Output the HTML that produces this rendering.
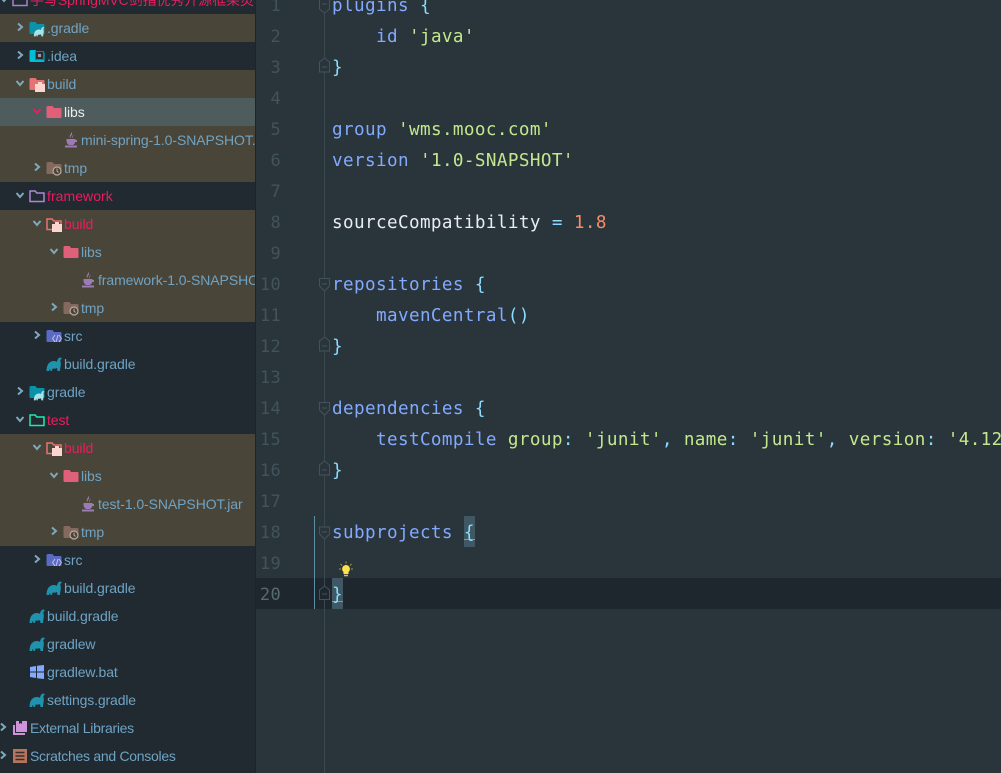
<!DOCTYPE html>
<html><head><meta charset="utf-8">
<style>
html,body{margin:0;padding:0;width:1001px;height:773px;overflow:hidden;background:#29343b}
#side{position:absolute;left:0;top:0;width:255px;height:773px;background:#202a30;overflow:hidden;font:14px "Liberation Sans","Noto Sans CJK SC",sans-serif;letter-spacing:-.08px;color:#6fa3c4}
.r{position:absolute;left:0;width:255px;height:28px;line-height:28px;white-space:nowrap}
.o{background:#4a4539}
.s{background:#4f5c5d}
.t{position:absolute;top:0}
.p{color:#e91e5f}
.w{color:#e8edf0}
svg.i{position:absolute;width:16px;height:16px;top:6px}
svg.a{position:absolute;width:10px;height:10px;top:8px;fill:none;stroke:#7fa9bd;stroke-width:2}
#gut{position:absolute;left:256px;top:0;width:745px;height:773px;overflow:hidden;font:17.6px/31px "DejaVu Sans Mono","Liberation Mono",monospace;letter-spacing:.4px;color:#82aaff;background:#29343b}
.l{position:absolute;left:76px;white-space:pre;height:31px;margin-top:1px}
.n{position:absolute;left:0;width:25px;text-align:right;color:#43535b;font-size:17px;letter-spacing:.3px;height:31px;margin-top:1px}
.g{color:#c3e88d}.b{color:#89ddff}
.h{position:absolute;width:11px;height:31px;background:#3f5863}
.h i{position:absolute;left:0;top:23px;width:11px;height:1px;background:#b2962f}
</style></head><body>
<svg width="0" height="0" style="position:absolute">
<defs>
<symbol id="f" viewBox="0 0 16 16"><path d="M0.500 3.500Q0.500 2 2 2H6.500L8 4H14.500Q15.500 4 15.500 5V13Q15.500 14 14.500 14H1.500Q0.500 14 0.500 13Z"/></symbol>
<symbol id="fo" viewBox="0 0 16 16"><path fill="none" stroke-width="1.500" d="M1 3H6.200L7.700 5H15V13.500H1Z"/></symbol>
<symbol id="e" viewBox="0 0 16 16"><path d="M0.500 15C0.500 9 3 5 8 5C9.500 5 10.500 5.500 11 6C11.200 3.500 12.500 1.500 14.500 1.500C15.800 1.500 16 3 15 3.500C13.800 3.500 14.500 5 14.800 7C15 10 14 12 14 15H11.500L11 12C10 12.700 8 12.800 6.500 12.500L6 15H4.500L4 12.800L3 15Z"/></symbol>
<symbol id="j" viewBox="0 0 16 16"><path d="M8.500 0C10.500 3 6.500 4 7.500 6.500C5.500 4.500 7.500 3 8.500 0ZM10.500 2.500C11 4.500 8.500 5 9.500 7C8 5.500 9.500 4.500 10.500 2.500ZM3.500 7H12.500V8H14V10H12.300C12 11.500 11 12.500 10 13H6C4.500 12.300 3.800 11 3.500 9ZM2 13.500H14V15.500H2Z"/></symbol>
</defs>
</svg>

<div id="side">
<div class="r" style="top:-14px"><svg class="a" style="left:-1px" viewBox="0 0 10 10"><path d="M1.500 3L5 7L8.500 3"/></svg><svg class="i" style="left:12px;stroke:#a97fc9;fill:#a97fc9"><use href="#fo"/></svg><span class="t p" style="left:30px;top:0">手写SpringMVC剑指优秀开源框架灵魂</span></div>

<div class="r o" style="top:14px"><svg class="a" style="left:15px" viewBox="0 0 10 10"><path d="M3 1.500L7 5L3 8.500"/></svg><svg class="i" style="left:29px;fill:#0a93a8"><use href="#f"/></svg><svg class="i" style="left:33px;top:12px;width:12px;height:11px;fill:#a8e3ea"><use href="#e"/></svg><span class="t" style="left:47px">.gradle</span></div>

<div class="r" style="top:42px"><svg class="a" style="left:15px" viewBox="0 0 10 10"><path d="M3 1.500L7 5L3 8.500"/></svg><svg class="i" style="left:29px;fill:#00bcd4"><use href="#f"/></svg><svg style="position:absolute;left:35px;top:9px;width:9px;height:9px"><rect x=".5" y=".5" width="8" height="8" fill="#2a2a3a" stroke="#3560d0"/><rect x="3" y="3" width="3" height="3" fill="#999"/></svg><span class="t" style="left:47px">.idea</span></div>

<div class="r o" style="top:70px"><svg class="a" style="left:15px" viewBox="0 0 10 10"><path d="M1.500 3L5 7L8.500 3"/></svg><svg class="i" style="left:29px;fill:#e57373"><use href="#f"/></svg><svg style="position:absolute;left:35px;top:11px;width:10px;height:11px"><path d="M0 3H3V1H7V3H10V11H0Z" fill="#fcd5cf"/></svg><span class="t" style="left:47px">build</span></div>

<div class="r s" style="top:98px"><svg class="a" style="left:32px;stroke:#e91e5f" viewBox="0 0 10 10"><path d="M1.500 3L5 7L8.500 3"/></svg><svg class="i" style="left:46px;fill:#e0607a"><use href="#f"/></svg><span class="t w" style="left:64px">libs</span></div>

<div class="r o" style="top:126px"><svg class="i" style="left:63px;fill:#9b7bb5"><use href="#j"/></svg><span class="t" style="left:81px">mini-spring-1.0-SNAPSHOT.jar</span></div>

<div class="r o" style="top:154px"><svg class="a" style="left:32px" viewBox="0 0 10 10"><path d="M3 1.500L7 5L3 8.500"/></svg><svg class="i" style="left:46px;fill:#84695f"><use href="#f"/></svg><svg style="position:absolute;left:52px;top:12px;width:10px;height:10px"><circle cx="5" cy="5" r="4" fill="#4a4539" stroke="#b9aaa0" stroke-width="1.200"/><path d="M5 2.500V5L6.500 6.500" stroke="#b9aaa0" fill="none"/></svg><span class="t" style="left:64px">tmp</span></div>

<div class="r" style="top:182px"><svg class="a" style="left:15px" viewBox="0 0 10 10"><path d="M1.500 3L5 7L8.500 3"/></svg><svg class="i" style="left:29px;stroke:#b085d5"><use href="#fo"/></svg><span class="t p" style="left:47px;letter-spacing:.05px">framework</span></div>

<div class="r o" style="top:210px"><svg class="a" style="left:32px" viewBox="0 0 10 10"><path d="M1.500 3L5 7L8.500 3"/></svg><svg class="i" style="left:46px;stroke:#e57373"><use href="#fo"/></svg><svg style="position:absolute;left:52px;top:11px;width:10px;height:11px"><path d="M0 3H3V1H7V3H10V11H0Z" fill="#fcd5cf"/></svg><span class="t p" style="left:64px">build</span></div>

<div class="r o" style="top:238px"><svg class="a" style="left:49px" viewBox="0 0 10 10"><path d="M1.500 3L5 7L8.500 3"/></svg><svg class="i" style="left:63px;fill:#e0607a"><use href="#f"/></svg><span class="t" style="left:81px">libs</span></div>

<div class="r o" style="top:266px"><svg class="i" style="left:80px;fill:#9b7bb5"><use href="#j"/></svg><span class="t" style="left:98px">framework-1.0-SNAPSHOT.jar</span></div>

<div class="r o" style="top:294px"><svg class="a" style="left:49px" viewBox="0 0 10 10"><path d="M3 1.500L7 5L3 8.500"/></svg><svg class="i" style="left:63px;fill:#84695f"><use href="#f"/></svg><svg style="position:absolute;left:69px;top:12px;width:10px;height:10px"><circle cx="5" cy="5" r="4" fill="#4a4539" stroke="#b9aaa0" stroke-width="1.200"/><path d="M5 2.500V5L6.500 6.500" stroke="#b9aaa0" fill="none"/></svg><span class="t" style="left:81px">tmp</span></div>

<div class="r" style="top:322px"><svg class="a" style="left:32px" viewBox="0 0 10 10"><path d="M3 1.500L7 5L3 8.500"/></svg><svg class="i" style="left:46px;fill:#5c6bc0"><use href="#f"/></svg><svg style="position:absolute;left:52px;top:12px;width:10px;height:9px"><path d="M3 1L0.500 4.500L3 8M7 1L9.500 4.500L7 8M6 1L4 8" fill="none" stroke="#b9c4f5"/></svg><span class="t" style="left:64px">src</span></div>

<div class="r" style="top:350px"><svg class="i" style="left:46px;fill:#1f93ad"><use href="#e"/></svg><span class="t" style="left:64px">build.gradle</span></div>

<div class="r" style="top:378px"><svg class="a" style="left:15px" viewBox="0 0 10 10"><path d="M3 1.500L7 5L3 8.500"/></svg><svg class="i" style="left:29px;fill:#0a93a8"><use href="#f"/></svg><svg class="i" style="left:33px;top:12px;width:12px;height:11px;fill:#a8e3ea"><use href="#e"/></svg><span class="t" style="left:47px">gradle</span></div>

<div class="r" style="top:406px"><svg class="a" style="left:15px" viewBox="0 0 10 10"><path d="M1.500 3L5 7L8.500 3"/></svg><svg class="i" style="left:29px;stroke:#1de9b6"><use href="#fo"/></svg><span class="t p" style="left:47px">test</span></div>

<div class="r o" style="top:434px"><svg class="a" style="left:32px" viewBox="0 0 10 10"><path d="M1.500 3L5 7L8.500 3"/></svg><svg class="i" style="left:46px;stroke:#e57373"><use href="#fo"/></svg><svg style="position:absolute;left:52px;top:11px;width:10px;height:11px"><path d="M0 3H3V1H7V3H10V11H0Z" fill="#fcd5cf"/></svg><span class="t p" style="left:64px">build</span></div>

<div class="r o" style="top:462px"><svg class="a" style="left:49px" viewBox="0 0 10 10"><path d="M1.500 3L5 7L8.500 3"/></svg><svg class="i" style="left:63px;fill:#e0607a"><use href="#f"/></svg><span class="t" style="left:81px">libs</span></div>

<div class="r o" style="top:490px"><svg class="i" style="left:80px;fill:#9b7bb5"><use href="#j"/></svg><span class="t" style="left:98px">test-1.0-SNAPSHOT.jar</span></div>

<div class="r o" style="top:518px"><svg class="a" style="left:49px" viewBox="0 0 10 10"><path d="M3 1.500L7 5L3 8.500"/></svg><svg class="i" style="left:63px;fill:#84695f"><use href="#f"/></svg><svg style="position:absolute;left:69px;top:12px;width:10px;height:10px"><circle cx="5" cy="5" r="4" fill="#4a4539" stroke="#b9aaa0" stroke-width="1.200"/><path d="M5 2.500V5L6.500 6.500" stroke="#b9aaa0" fill="none"/></svg><span class="t" style="left:81px">tmp</span></div>

<div class="r" style="top:546px"><svg class="a" style="left:32px" viewBox="0 0 10 10"><path d="M3 1.500L7 5L3 8.500"/></svg><svg class="i" style="left:46px;fill:#5c6bc0"><use href="#f"/></svg><svg style="position:absolute;left:52px;top:12px;width:10px;height:9px"><path d="M3 1L0.500 4.500L3 8M7 1L9.500 4.500L7 8M6 1L4 8" fill="none" stroke="#b9c4f5"/></svg><span class="t" style="left:64px">src</span></div>

<div class="r" style="top:574px"><svg class="i" style="left:46px;fill:#1f93ad"><use href="#e"/></svg><span class="t" style="left:64px">build.gradle</span></div>
<div class="r" style="top:602px"><svg class="i" style="left:29px;fill:#1f93ad"><use href="#e"/></svg><span class="t" style="left:47px">build.gradle</span></div>
<div class="r" style="top:630px"><svg class="i" style="left:29px;fill:#1f93ad"><use href="#e"/></svg><span class="t" style="left:47px">gradlew</span></div>
<div class="r" style="top:658px"><svg class="i" style="left:29px;fill:#82aaff" viewBox="0 0 16 16"><path d="M1 3L7 2V7.500H1ZM8 1.800L15 1V7.500H8ZM1 8.500H7V14L1 13ZM8 8.500H15V15L8 14.200Z"/></svg><span class="t" style="left:47px">gradlew.bat</span></div>
<div class="r" style="top:686px"><svg class="i" style="left:29px;fill:#1f93ad"><use href="#e"/></svg><span class="t" style="left:47px;letter-spacing:-.14px">settings.gradle</span></div>

<div class="r" style="top:714px"><svg class="a" style="left:-2px" viewBox="0 0 10 10"><path d="M3 1.500L7 5L3 8.500"/></svg><svg class="i" style="left:12px;fill:#ce93d8" viewBox="0 0 16 16"><path d="M4 1H7V4L8.500 3L10 4V1H15V12H4ZM1 5H3V13H13V15H1Z"/></svg><span class="t" style="left:30px;letter-spacing:-.28px">External Libraries</span></div>
<div class="r" style="top:742px"><svg class="a" style="left:-2px" viewBox="0 0 10 10"><path d="M3 1.500L7 5L3 8.500"/></svg><svg class="i" style="left:12px" viewBox="0 0 16 16"><rect x="1" y="1" width="14" height="14" fill="#b5755c"/><path d="M3.500 4.500H12.500M3.500 8H12.500M3.500 11.500H12.500" stroke="#3a2e2a" stroke-width="1.500"/></svg><span class="t" style="left:30px;letter-spacing:-.28px">Scratches and Consoles</span></div>
</div>
<div style="position:absolute;left:255px;top:0;width:1px;height:773px;background:#1c252a"></div>

<div id="gut">
<div style="position:absolute;left:0;top:578px;width:745px;height:31px;background:#1e272d"></div>
<div style="position:absolute;left:68px;top:0;width:1px;height:773px;background:#3a4850"></div>
<div style="position:absolute;left:58px;top:516px;width:1px;height:93px;background:#5d8ea3"></div>

<div class="n" style="top:-10px">1</div><div class="n" style="top:21px">2</div><div class="n" style="top:52px">3</div><div class="n" style="top:83px">4</div><div class="n" style="top:114px">5</div><div class="n" style="top:145px">6</div><div class="n" style="top:176px">7</div><div class="n" style="top:207px">8</div><div class="n" style="top:238px">9</div><div class="n" style="top:269px">10</div><div class="n" style="top:300px">11</div><div class="n" style="top:331px">12</div><div class="n" style="top:362px">13</div><div class="n" style="top:393px">14</div><div class="n" style="top:424px">15</div><div class="n" style="top:455px">16</div><div class="n" style="top:486px">17</div><div class="n" style="top:517px">18</div><div class="n" style="top:548px">19</div><div class="n" style="top:579px;color:#566a73">20</div>

<svg style="position:absolute;left:0;top:0;width:90px;height:773px" fill="#29343b" stroke="#43535b">
<path d="M63.500 -1V9L68.500 13L73.500 9V-1Z"/><path d="M66 4H71"/>
<path d="M63.500 72V62L68.500 58L73.500 62V72Z"/><path d="M66 67H71"/>
<path d="M63.500 278.500V286L68.500 291L73.500 286V278.500Z"/><path d="M66 284H71"/>
<path d="M63.500 351V341L68.500 337L73.500 341V351Z"/><path d="M66 346H71"/>
<path d="M63.500 402.500V410L68.500 415L73.500 410V402.500Z"/><path d="M66 408H71"/>
<path d="M63.500 475V465L68.500 461L73.500 465V475Z"/><path d="M66 470H71"/>
<path d="M63.500 527V534L68.500 539L73.500 534V527Z"/><path d="M66 532H71"/>
<path d="M63.500 599.500V590L68.500 586L73.500 590V599.500Z" fill="#1e272d"/><path d="M66 594H71"/>
</svg>

<div class="h" style="left:208px;top:516px"><i></i></div>
<div class="h" style="left:76px;top:578px"><i></i></div>

<div class="l" style="top:-10px">plugins <span class="b">{</span></div>
<div class="l" style="top:21px">    id <span class="g">'java'</span></div>
<div class="l b" style="top:52px">}</div>
<div class="l" style="top:114px">group <span class="g">'wms.mooc.com'</span></div>
<div class="l" style="top:145px">version <span class="g">'1.0-SNAPSHOT'</span></div>
<div class="l" style="top:207px"><span style="color:#e8edf0">sourceCompatibility</span> <span class="b">=</span> <span style="color:#f78c6c">1.8</span></div>
<div class="l" style="top:269px">repositories <span class="b">{</span></div>
<div class="l" style="top:300px">    mavenCentral<span class="b">()</span></div>
<div class="l b" style="top:331px">}</div>
<div class="l" style="top:393px">dependencies <span class="b">{</span></div>
<div class="l" style="top:424px">    testCompile <span class="g">group</span><span class="b">:</span> <span class="g">'junit'</span><span class="b">,</span> <span class="g">name</span><span class="b">:</span> <span class="g">'junit'</span><span class="b">,</span> <span class="g">version</span><span class="b">:</span> <span class="g">'4.12'</span></div>
<div class="l b" style="top:455px">}</div>
<div class="l" style="top:517px">subprojects <span class="b">{</span></div>
<div class="l b" style="top:579px">}</div>

<svg style="position:absolute;left:81px;top:561px;width:18px;height:18px" viewBox="0 0 18 18"><path d="M9 4A4 4 0 0 1 11.500 11V13H6.500V11A4 4 0 0 1 9 4Z" fill="#ffe34d"/><path d="M7 14.500H11" stroke="#e0c040" stroke-width="1.500"/><path d="M9 0.500V2.500M2 8H4M14 8H16M3.500 3L5 4.500M14.500 3L13 4.500" stroke="#a89a3a"/></svg>
</div>
</body></html>
